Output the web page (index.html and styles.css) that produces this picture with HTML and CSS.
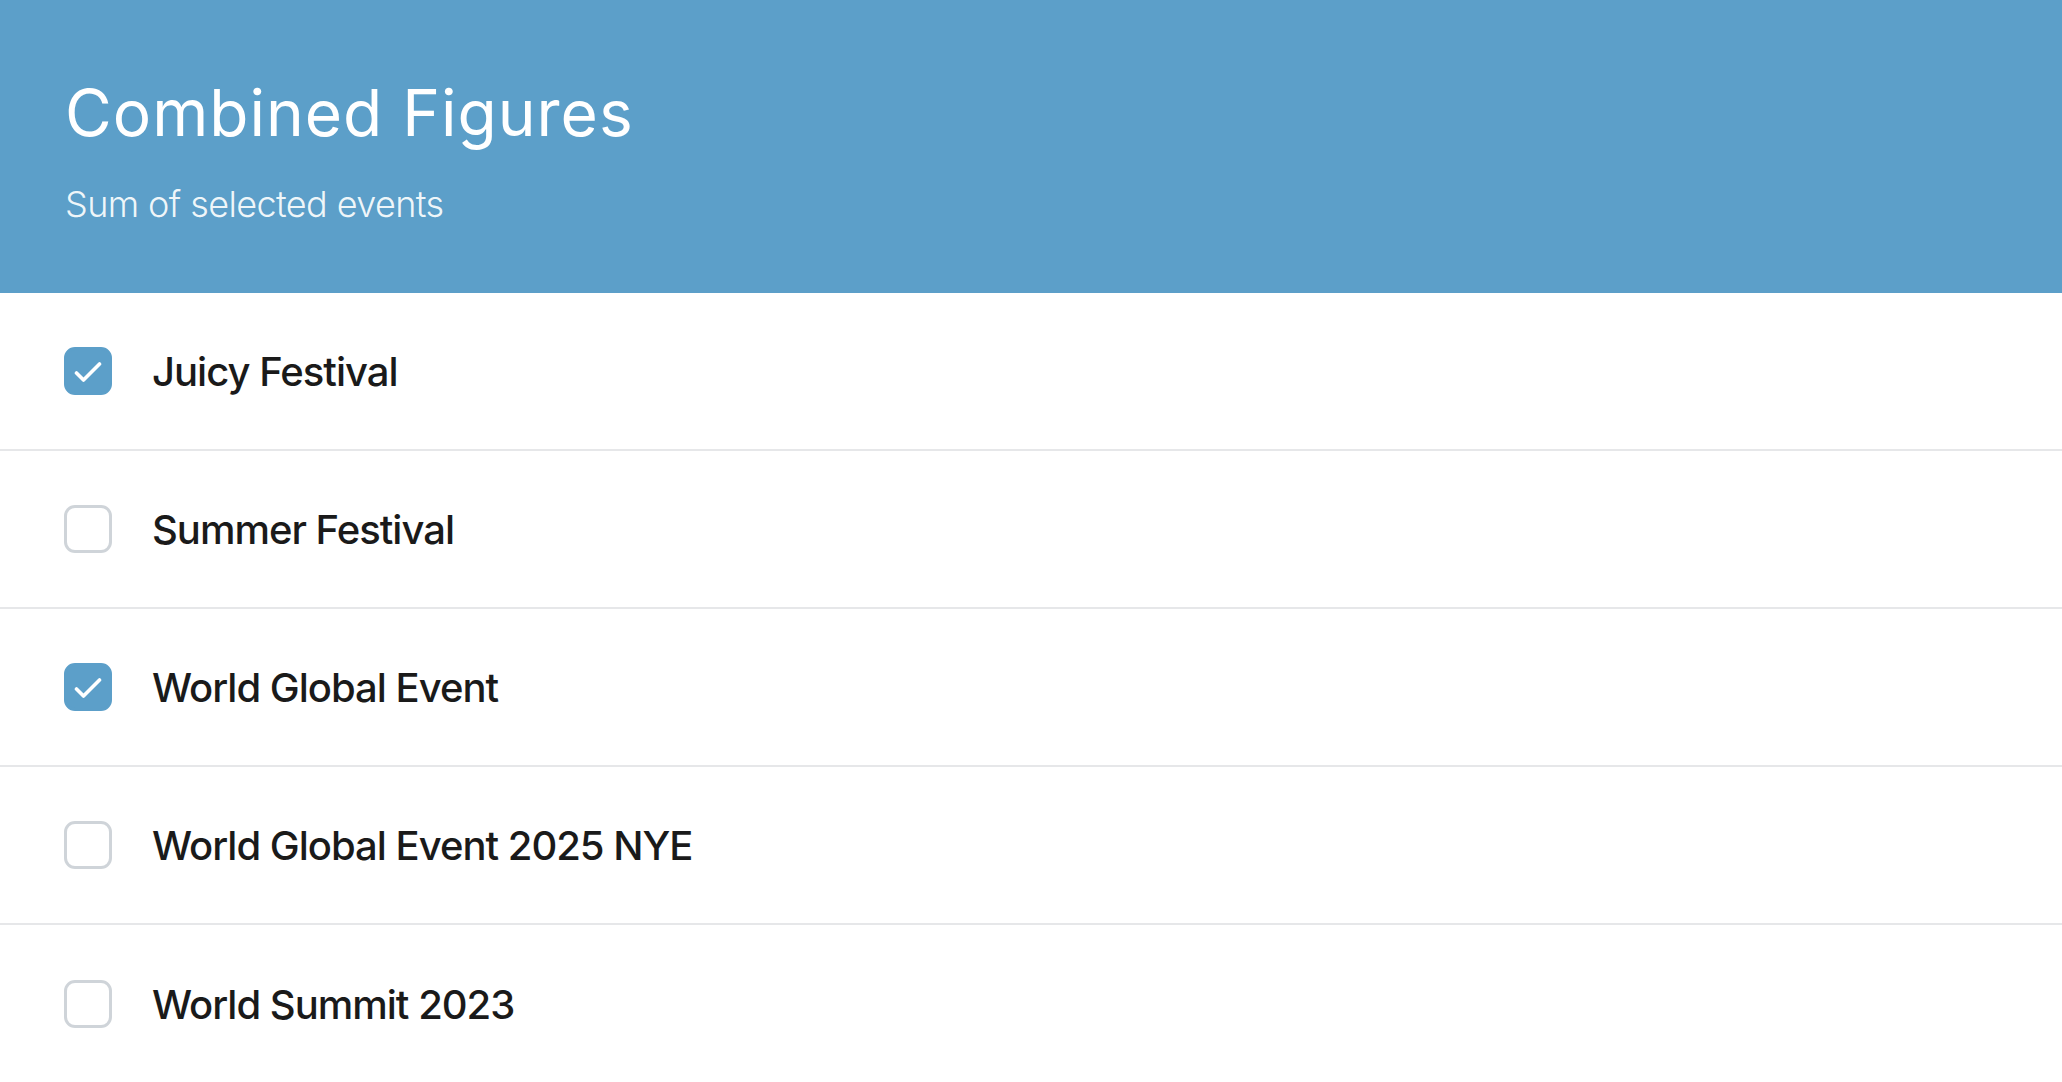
FILE: index.html
```html
<!DOCTYPE html>
<html>
<head>
<meta charset="utf-8">
<link rel="stylesheet" href="styles.css">
</head>
<body>
<header class="header">
  <h1 class="title">Combined Figures</h1>
  <p class="subtitle">Sum of selected events</p>
</header>
<ul class="list">
  <li class="row"><span class="box checked"><svg class="check" viewBox="0 0 28 22"><path d="M2.5 12L9.5 19L25.5 3" fill="none" stroke="#fff" stroke-width="3.6" stroke-linecap="round" stroke-linejoin="round"/></svg></span><span class="label">Juicy Festival</span></li>
  <li class="row"><span class="box"></span><span class="label">Summer Festival</span></li>
  <li class="row"><span class="box checked"><svg class="check" viewBox="0 0 28 22"><path d="M2.5 12L9.5 19L25.5 3" fill="none" stroke="#fff" stroke-width="3.6" stroke-linecap="round" stroke-linejoin="round"/></svg></span><span class="label">World Global Event</span></li>
  <li class="row"><span class="box"></span><span class="label">World Global Event 2025 NYE</span></li>
  <li class="row"><span class="box"></span><span class="label">World Summit 2023</span></li>
</ul>
</body>
</html>
```
FILE: styles.css
```css
* { box-sizing: border-box; }
html, body { margin: 0; padding: 0; background: #fff; }
body { font-family: Inter, "Noto Sans", sans-serif; }
.header {
  background: #5c9fc9;
  height: 293px;
  padding: 74px 65px 0;
  color: #fff;
}
.title {
  margin: 0;
  font-size: 64px;
  font-weight: 400;
  line-height: 78px;
  letter-spacing: 1px;
}
.subtitle {
  margin: 30px 0 0;
  font-size: 36px;
  font-weight: 300;
  line-height: 44px;
  letter-spacing: -0.6px;
  color: rgba(255,255,255,0.92);
}
.list { list-style: none; margin: 0; padding: 0; }
.row {
  height: 158px;
  display: flex;
  align-items: center;
  padding: 0 64px;
  gap: 40px;
  border-bottom: 2px solid #e6e7e9;
}
.row:last-child { border-bottom: none; }
.box {
  width: 48px; height: 48px;
  border-radius: 11px;
  border: 3px solid #cfd4d9;
  display: flex; align-items: center; justify-content: center;
  flex-shrink: 0;
}
.box.checked { background: #5c9fc9; border-color: #5c9fc9; }
.check { width: 28px; height: 22px; display: block; margin-top: 1px; }
.label {
  font-size: 40px;
  font-weight: 500;
  letter-spacing: -1px;
  color: #1a1a1a;
}
```
